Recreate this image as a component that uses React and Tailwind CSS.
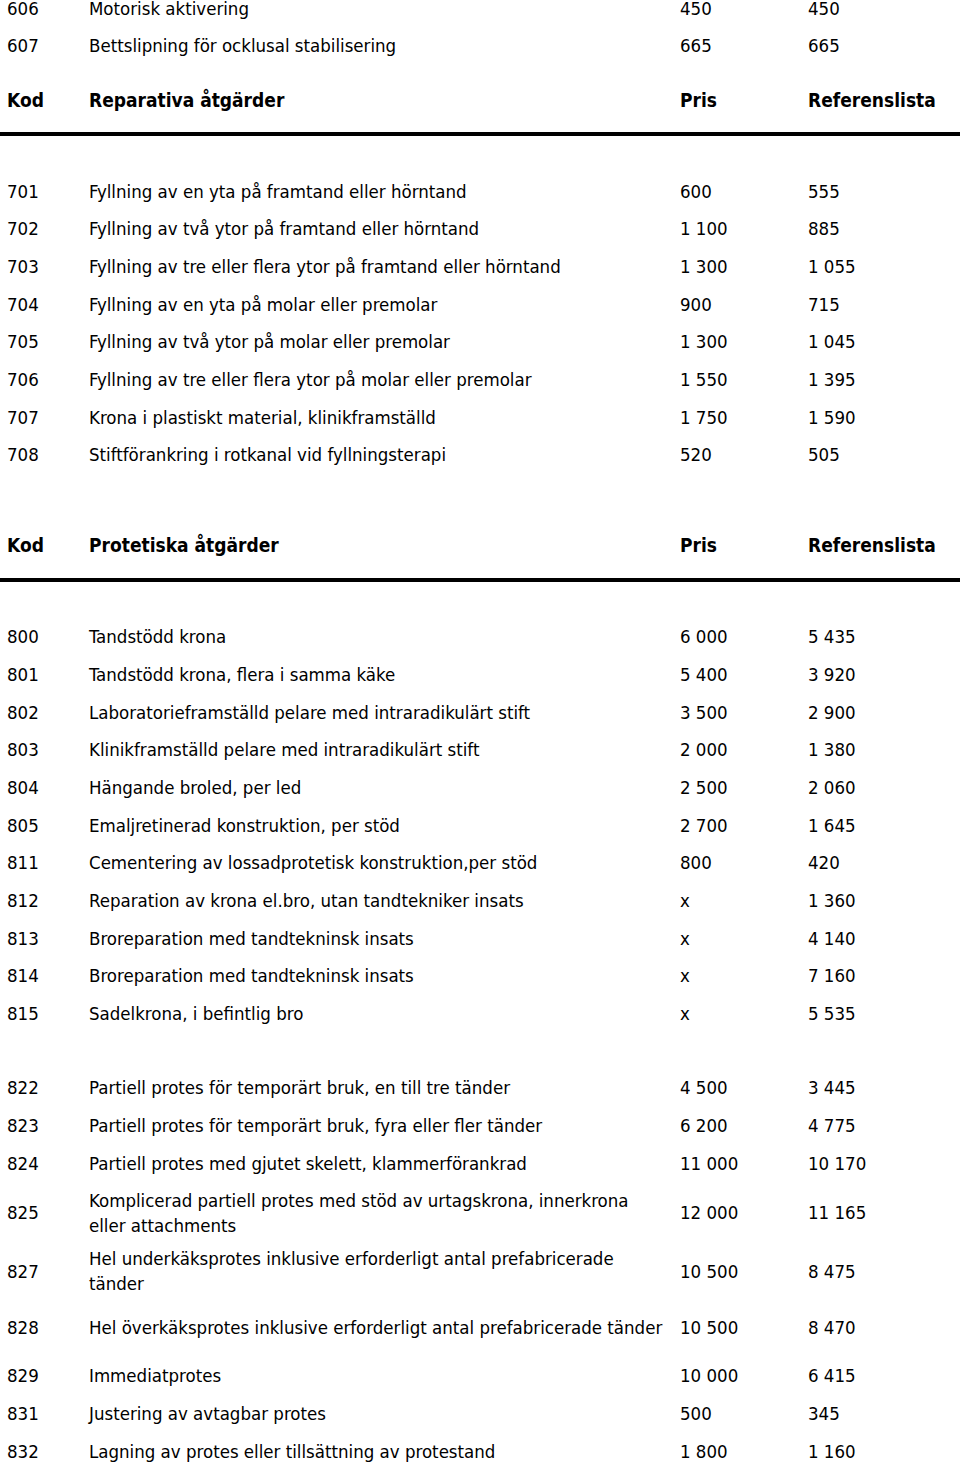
import React from "react";

const F = { fontFamily: '"DejaVu Sans Condensed", "DejaVu Sans", sans-serif' };

function Row({ k, d, p, r, h = "h-[37.7px]" }) {
  return (
    <div className={`flex items-center ${h} pl-[7px] text-[18.5px] leading-[25px] text-black`}>
      <div className="w-[82px] shrink-0">{k}</div>
      <div className="w-[591px] shrink-0 whitespace-nowrap">{d}</div>
      <div className="w-[128px] shrink-0">{p}</div>
      <div className="flex-1">{r}</div>
    </div>
  );
}

function Header({ title, pt, h }) {
  return (
    <div className={`flex items-start ${h} ${pt} pl-[7px] text-[19px] leading-[25px] font-bold text-black border-b-4 border-black`}>
      <div className="w-[82px] shrink-0">Kod</div>
      <div className="w-[591px] shrink-0">{title}</div>
      <div className="w-[128px] shrink-0">Pris</div>
      <div className="flex-1 whitespace-nowrap">Referenslista</div>
    </div>
  );
}

export default function App() {
  const rep = [
    ["701", "Fyllning av en yta på framtand eller hörntand", "600", "555"],
    ["702", "Fyllning av två ytor på framtand eller hörntand", "1 100", "885"],
    ["703", "Fyllning av tre eller flera ytor på framtand eller hörntand", "1 300", "1 055"],
    ["704", "Fyllning av en yta på molar eller premolar", "900", "715"],
    ["705", "Fyllning av två ytor på molar eller premolar", "1 300", "1 045"],
    ["706", "Fyllning av tre eller flera ytor på molar eller premolar", "1 550", "1 395"],
    ["707", "Krona i plastiskt material, klinikframställd", "1 750", "1 590"],
    ["708", "Stiftförankring i rotkanal vid fyllningsterapi", "520", "505"],
  ];
  const prot = [
    ["800", "Tandstödd krona", "6 000", "5 435"],
    ["801", "Tandstödd krona, flera i samma käke", "5 400", "3 920"],
    ["802", "Laboratorieframställd pelare med intraradikulärt stift", "3 500", "2 900"],
    ["803", "Klinikframställd pelare med intraradikulärt stift", "2 000", "1 380"],
    ["804", "Hängande broled, per led", "2 500", "2 060"],
    ["805", "Emaljretinerad konstruktion, per stöd", "2 700", "1 645"],
    ["811", "Cementering av lossadprotetisk konstruktion,per stöd", "800", "420"],
    ["812", "Reparation av krona el.bro, utan tandtekniker insats", "x", "1 360"],
    ["813", "Broreparation med tandtekninsk insats", "x", "4 140"],
    ["814", "Broreparation med tandtekninsk insats", "x", "7 160"],
    ["815", "Sadelkrona, i befintlig bro", "x", "5 535"],
  ];
  return (
    <div className="w-[960px] h-[1467px] overflow-hidden bg-white" style={F}>
      <div className="-mt-[10.85px]">
        <Row k="606" d="Motorisk aktivering" p="450" r="450" />
        <Row k="607" d="Bettslipning för ocklusal stabilisering" p="665" r="665" />
        <Header title="Reparativa åtgärder" pt="pt-[23px]" h="h-[71.5px]" />
        <div className="h-[36.15px]" />
        {rep.map((x) => (
          <Row key={x[0]} k={x[0]} d={x[1]} p={x[2]} r={x[3]} />
        ))}
        <Header title="Protetiska åtgärder" pt="pt-[59.65px]" h="h-[108.15px]" />
        <div className="h-[36.15px]" />
        {prot.map((x) => (
          <Row key={x[0]} k={x[0]} d={x[1]} p={x[2]} r={x[3]} />
        ))}
        <div className="h-[36.3px]" />
        <Row k="822" d="Partiell protes för temporärt bruk, en till tre tänder" p="4 500" r="3 445" />
        <Row k="823" d="Partiell protes för temporärt bruk, fyra eller fler tänder" p="6 200" r="4 775" />
        <Row k="824" d="Partiell protes med gjutet skelett, klammerförankrad" p="11 000" r="10 170" />
        <Row
          k="825"
          d={<>Komplicerad partiell protes med stöd av urtagskrona, innerkrona<br />eller attachments</>}
          p="12 000"
          r="11 165"
          h="h-[62px]"
        />
        <Row
          k="827"
          d={<>Hel underkäksprotes inklusive erforderligt antal prefabricerade<br />tänder</>}
          p="10 500"
          r="8 475"
          h="h-[55px]"
        />
        <Row k="828" d="Hel överkäksprotes inklusive erforderligt antal prefabricerade tänder" p="10 500" r="8 470" h="h-[58px]" />
        <Row k="829" d="Immediatprotes" p="10 000" r="6 415" h="h-[38px]" />
        <Row k="831" d="Justering av avtagbar protes" p="500" r="345" />
        <Row k="832" d="Lagning av protes eller tillsättning av protestand" p="1 800" r="1 160" />
      </div>
    </div>
  );
}
